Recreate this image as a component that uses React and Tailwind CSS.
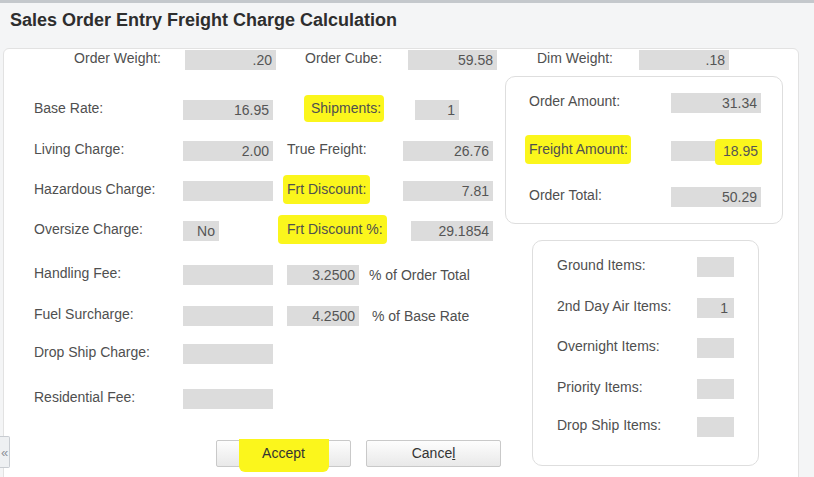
import React from 'react';

const Box = ({ className = '', children }) => (
  <div className={`h-[20px] bg-[#dcdcdc] text-[#555] text-right pr-[4px] leading-[20px] ${className}`}>
    {children}
  </div>
);

const Mark = ({ className = '', children }) => (
  <span className={`inline-block bg-[#fbf61c] rounded-[4px] ${className}`}>{children}</span>
);

const App = () => {
  return (
    <div className="relative w-[814px] h-[477px] overflow-hidden bg-[#f4f5f6] border-t-[3px] border-[#c4c8cc] font-['Liberation_Sans',Arial,sans-serif] text-[14px] text-[#4f4f4f]">
      {/* Title */}
      <div className="h-[45px] pl-[10px] pt-[7px]">
        <h1 className="text-[18px] leading-[20px] font-bold text-[#2e2e2e]">
          Sales Order Entry Freight Charge Calculation
        </h1>
      </div>

      {/* Main panel */}
      <div className="ml-[3px] w-[796px] h-[440px] bg-white border border-[#e2e2e2] rounded-t-[6px]">
        {/* Top row */}
        <div className="flex items-center mt-[1px] h-[20px]">
          <div className="w-[157px] text-right mb-[4px]">Order Weight:</div>
          <Box className="ml-[24px] w-[91px]">.20</Box>
          <div className="ml-[29px] w-[103px] mb-[4px]">Order Cube:</div>
          <Box className="w-[89px]">59.58</Box>
          <div className="ml-[40px] w-[102px] mb-[4px]">Dim Weight:</div>
          <Box className="w-[90px]">.18</Box>
        </div>

        <div className="flex">
          {/* Left form */}
          <div className="w-[501px] pt-[30px]">
            <div className="flex items-center h-[20px]">
              <div className="w-[179px] pl-[30px] mb-[4px]">Base Rate:</div>
              <div className="w-[104px]"><Box className="w-[90px]">16.95</Box></div>
              <div className="w-[128px] pl-[24px] mb-[4px]">
                <Mark className="-ml-[7px] pl-[7px] pr-[3px] py-[3px]">Shipments:</Mark>
              </div>
              <Box className="w-[44px]">1</Box>
            </div>

            <div className="flex items-center h-[20px] mt-[21px]">
              <div className="w-[179px] pl-[30px] mb-[4px]">Living Charge:</div>
              <div className="w-[104px]"><Box className="w-[90px]">2.00</Box></div>
              <div className="w-[116px] mb-[4px]">True Freight:</div>
              <Box className="w-[90px]">26.76</Box>
            </div>

            <div className="flex items-center h-[20px] mt-[20px]">
              <div className="w-[179px] pl-[30px] mb-[4px]">Hazardous Charge:</div>
              <div className="w-[104px]"><Box className="w-[90px]" /></div>
              <div className="w-[116px] mb-[4px]">
                <Mark className="-ml-[4px] pl-[4px] pr-[4px] py-[4px]">Frt Discount:</Mark>
              </div>
              <Box className="w-[90px]">7.81</Box>
            </div>

            <div className="flex items-center h-[20px] mt-[20px]">
              <div className="w-[179px] pl-[30px] mb-[4px]">Oversize Charge:</div>
              <div className="w-[104px]">
                <Box className="w-[36px] text-left pl-[5px]">No</Box>
              </div>
              <div className="w-[124px] mb-[4px]">
                <Mark className="-ml-[9px] pl-[9px] pr-[4px] py-[4px]">Frt Discount %:</Mark>
              </div>
              <Box className="w-[82px]">29.1854</Box>
            </div>

            <div className="flex items-center h-[20px] mt-[24px]">
              <div className="w-[179px] pl-[30px] mb-[4px]">Handling Fee:</div>
              <div className="w-[104px]"><Box className="w-[90px]" /></div>
              <Box className="w-[72px]">3.2500</Box>
              <div className="ml-[10px]">% of Order Total</div>
            </div>

            <div className="flex items-center h-[20px] mt-[21px]">
              <div className="w-[179px] pl-[30px] mb-[4px]">Fuel Surcharge:</div>
              <div className="w-[104px]"><Box className="w-[90px]" /></div>
              <Box className="w-[72px]">4.2500</Box>
              <div className="ml-[13px]">% of Base Rate</div>
            </div>

            <div className="flex items-center h-[20px] mt-[18px]">
              <div className="w-[179px] pl-[30px] mb-[4px]">Drop Ship Charge:</div>
              <Box className="w-[90px]" />
            </div>

            <div className="flex items-center h-[20px] mt-[25px]">
              <div className="w-[179px] pl-[30px] mb-[4px]">Residential Fee:</div>
              <Box className="w-[90px]" />
            </div>

            {/* Buttons */}
            <div className="flex mt-[31px] pl-[212px]">
              <button className="relative w-[135px] h-[27px] border border-[#c9c9c9] rounded-[2px] bg-gradient-to-b from-[#fdfdfd] to-[#e9e9e9] text-[#333]">
                <span className="absolute left-[22px] w-[90px] -top-[2px] -bottom-[6px] bg-[#fbf61c] rounded-b-[6px]"></span>
                <span className="relative">Accept</span>
              </button>
              <button className="ml-[15px] w-[135px] h-[27px] border border-[#c9c9c9] rounded-[2px] bg-gradient-to-b from-[#fdfdfd] to-[#e9e9e9] text-[#333]">
                Cance<u>l</u>
              </button>
            </div>
          </div>

          {/* Right column */}
          <div className="pt-[6px]">
            <div className="w-[278px] h-[148px] border border-[#dedede] rounded-[10px] pt-[16px]">
              <div className="flex items-center h-[20px]">
                <div className="w-[165px] pl-[23px] mb-[4px]">Order Amount:</div>
                <Box className="w-[90px]">31.34</Box>
              </div>
              <div className="flex items-center h-[20px] mt-[28px]">
                <div className="w-[165px] pl-[23px] mb-[4px]">
                  <Mark className="-ml-[4px] pl-[4px] pr-[3px] py-[4px]">Freight Amount:</Mark>
                </div>
                <div className="relative w-[90px] h-[20px] bg-[#dcdcdc]">
                  <div className="absolute -right-[1px] -top-[2px] -bottom-[4px] w-[47px] bg-[#fbf61c] rounded-[4px] text-right pr-[4px] pt-[2px] leading-[20px] text-[#555]">
                    18.95
                  </div>
                </div>
              </div>
              <div className="flex items-center h-[20px] mt-[26px]">
                <div className="w-[165px] pl-[23px] mb-[4px]">Order Total:</div>
                <Box className="w-[90px]">50.29</Box>
              </div>
            </div>

            <div className="ml-[27px] mt-[16px] w-[227px] h-[226px] border border-[#dedede] rounded-[10px] pt-[16px]">
              <div className="flex items-center h-[20px]">
                <div className="w-[164px] pl-[24px] mb-[4px]">Ground Items:</div>
                <Box className="w-[37px]" />
              </div>
              <div className="flex items-center h-[20px] mt-[21px]">
                <div className="w-[164px] pl-[24px] mb-[4px]">2nd Day Air Items:</div>
                <Box className="w-[37px] pr-[6px]">1</Box>
              </div>
              <div className="flex items-center h-[20px] mt-[20px]">
                <div className="w-[164px] pl-[24px] mb-[4px]">Overnight Items:</div>
                <Box className="w-[37px]" />
              </div>
              <div className="flex items-center h-[20px] mt-[21px]">
                <div className="w-[164px] pl-[24px] mb-[4px]">Priority Items:</div>
                <Box className="w-[37px]" />
              </div>
              <div className="flex items-center h-[20px] mt-[18px]">
                <div className="w-[164px] pl-[24px] mb-[4px]">Drop Ship Items:</div>
                <Box className="w-[37px]" />
              </div>
            </div>
          </div>
        </div>
      </div>

      {/* Collapse tab */}
      <div className="absolute left-0 top-[433px] w-[10px] h-[32px] bg-[#eef0f2] border border-l-0 border-[#c8ccd1] rounded-r-[2px] flex items-center justify-center text-[13px] text-[#8b9097] leading-none">
        «
      </div>
    </div>
  );
};

export default App;
